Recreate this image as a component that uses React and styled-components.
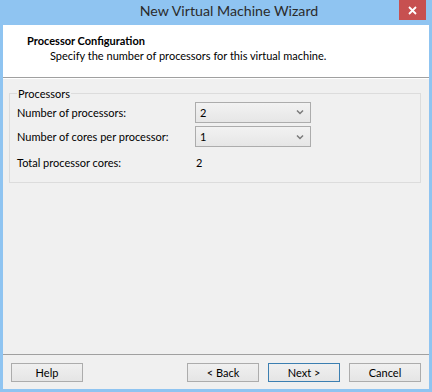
import React, { useState } from 'react';
import styled, { createGlobalStyle } from 'styled-components';

const GlobalStyle = createGlobalStyle`
  html, body {
    margin: 0;
    padding: 0;
    background: #8fc4f1;
  }
  * {
    box-sizing: border-box;
  }
`;

const Window = styled.div`
  width: 432px;
  height: 392px;
  display: flex;
  flex-direction: column;
  background: #8fc4f1;
  padding: 0 3px 3px 3px;
  font-family: Lato, "Noto Sans", sans-serif;
  font-size: 11px;
  color: #000;
`;

const TitleBar = styled.div`
  height: 25px;
  display: flex;
  align-items: flex-start;
`;

const Title = styled.div`
  flex: 1;
  text-align: center;
  padding-left: 56px;
  font-size: 14.2px;
  line-height: 22px;
  color: #2b2b2b;
`;

const CloseButton = styled.div`
  width: 27px;
  height: 20px;
  margin-right: 3px;
  background: #c75050;
  display: flex;
  align-items: center;
  justify-content: center;
`;

const Client = styled.div`
  flex: 1;
  display: flex;
  flex-direction: column;
  background: #f0f0f0;
`;

const Header = styled.div`
  height: 53px;
  background: #fff;
  border-bottom: 1px solid #a0a0a0;
  padding: 8px 0 0 24px;
`;

const HeaderTitle = styled.div`
  font-weight: bold;
  line-height: 15px;
`;

const HeaderDesc = styled.div`
  padding-left: 23px;
  line-height: 16px;
`;

const Content = styled.div`
  flex: 1;
  border-top: 1px solid #fff;
  padding: 8px 8px 0 6px;
`;

const Group = styled.fieldset`
  margin: 0;
  border: 1px solid #dcdcdc;
  padding: 1px 0 8px 7px;
  min-width: 0;
`;

const Legend = styled.legend`
  padding: 0 1px;
  margin-left: 0;
  line-height: 13px;
  color: #000;
`;

const Row = styled.div`
  display: flex;
  align-items: center;
  height: ${p => p.h}px;
`;

const Label = styled.div`
  width: 178px;
`;

const SelectBox = styled.div`
  width: 116px;
  height: ${p => p.h}px;
  border: 1px solid #acacac;
  background: linear-gradient(#f2f2f2, #e6e6e6);
  display: flex;
  align-items: center;
  padding: 0 6px 0 4px;
  justify-content: space-between;
`;

const Value = styled.div`
  padding-left: 1px;
`;

const Footer = styled.div`
  border-top: 1px solid #a0a0a0;
  padding: 8px 8px 7px 8px;
  display: flex;
  align-items: center;
`;

const Button = styled.div`
  width: 72px;
  height: 19px;
  border: 1px solid ${p => (p.primary ? '#3c7fb1' : '#acacac')};
  background: linear-gradient(#f0f0f0, #e5e5e5);
  display: flex;
  align-items: center;
  justify-content: center;
  margin-left: ${p => p.gap || 0}px;
`;

const Spacer = styled.div`
  flex: 1;
`;

const Chevron = () => (
  <svg width="8" height="6" viewBox="0 0 8 6">
    <path d="M1 1.5 L4 4.5 L7 1.5" fill="none" stroke="#7a7a7a" strokeWidth="1.5" />
  </svg>
);

const Select = ({ value, h }) => (
  <SelectBox h={h}>
    <span>{value}</span>
    <Chevron />
  </SelectBox>
);

export default function App() {
  const [procs] = useState(2);
  const [cores] = useState(1);

  return (
    <Window>
      <GlobalStyle />
      <TitleBar>
        <Title>New Virtual Machine Wizard</Title>
        <CloseButton>
          <svg width="9" height="9" viewBox="0 0 9 9">
            <path d="M1 1 L8 8 M8 1 L1 8" stroke="#fff" strokeWidth="1.8" />
          </svg>
        </CloseButton>
      </TitleBar>
      <Client>
        <Header>
          <HeaderTitle>Processor Configuration</HeaderTitle>
          <HeaderDesc>Specify the number of processors for this virtual machine.</HeaderDesc>
        </Header>
        <Content>
          <Group>
            <Legend>Processors</Legend>
            <Row h={22}>
              <Label>Number of processors:</Label>
              <Select value={procs} h={21} />
            </Row>
            <Row h={27}>
              <Label>Number of cores per processor:</Label>
              <Select value={cores} h={21} />
            </Row>
            <Row h={24}>
              <Label>Total processor cores:</Label>
              <Value>{procs * cores}</Value>
            </Row>
          </Group>
        </Content>
        <Footer>
          <Button>Help</Button>
          <Spacer />
          <Button>&lt; Back</Button>
          <Button primary gap={9}>Next &gt;</Button>
          <Button gap={9}>Cancel</Button>
        </Footer>
      </Client>
    </Window>
  );
}
